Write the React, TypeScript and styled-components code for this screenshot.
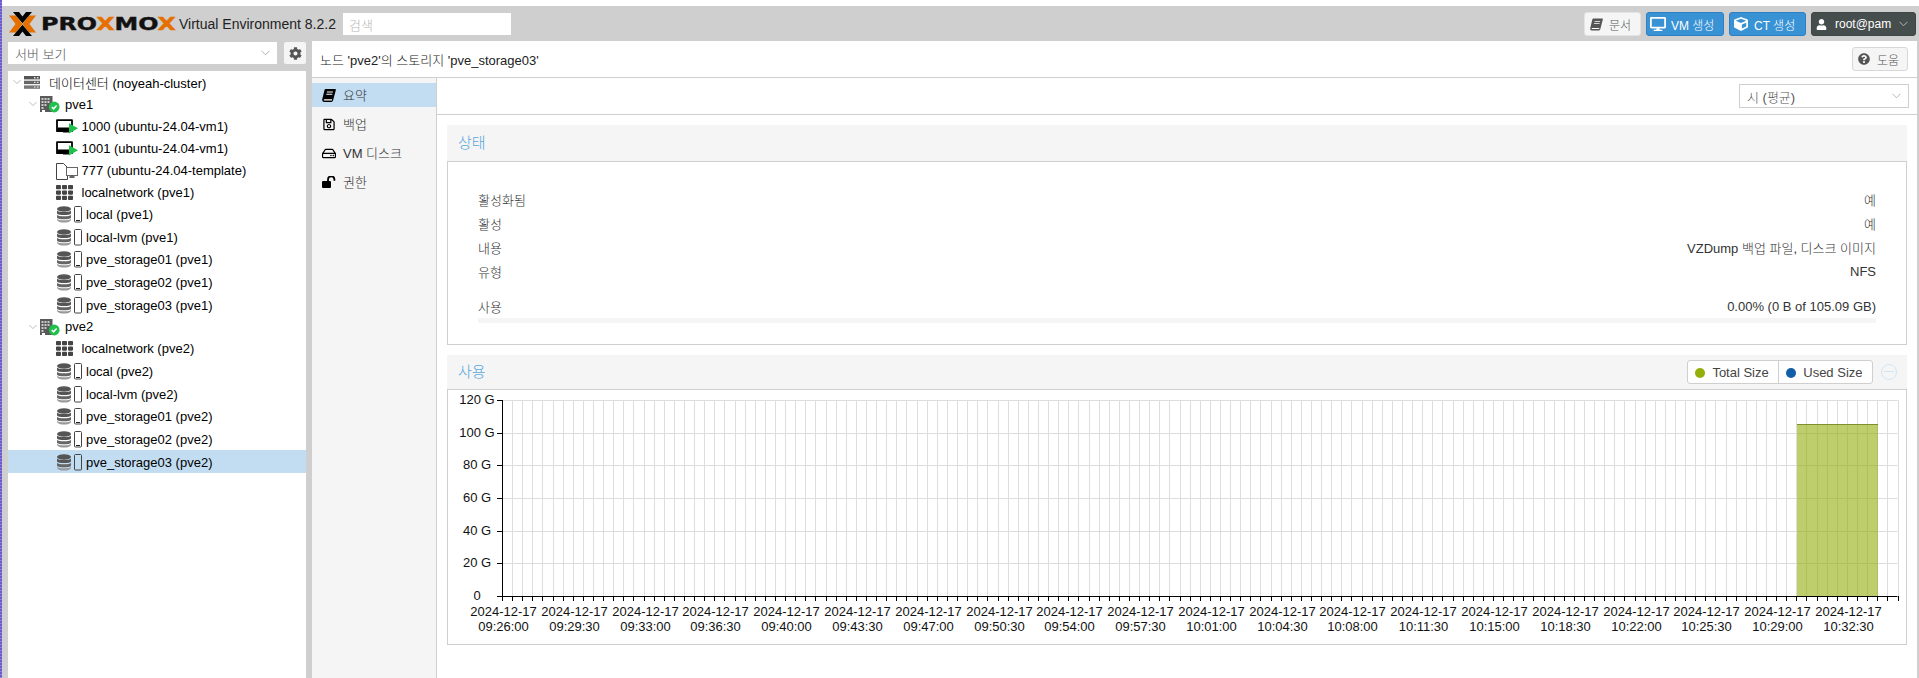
import { Fragment } from "react";
import styled, { createGlobalStyle } from "styled-components";
import {
  FaCog,
  FaCube,
  FaDesktop,
  FaQuestionCircle,
  FaRegHdd,
  FaRegSave,
  FaTh,
  FaUser,
} from "react-icons/fa";

const GlobalStyle = createGlobalStyle`
  html, body {
    margin: 0;
    padding: 0;
    background: #fff;
    overflow: hidden;
  }
  body {
    font-family: "Liberation Sans", "Noto Sans CJK KR", sans-serif;
    font-size: 13px;
    font-weight: 300;
    color: #000;
  }
`;

const Page = styled.div`
  display: flex;
  height: 678px;
  overflow: hidden;
`;

const EdgeStrip = styled.div`
  width: 2px;
  flex: none;
  background: repeating-linear-gradient(#6a5acd 0 2px, #8f84dc 2px 3px);
`;

const Viewport = styled.div`
  flex: 1;
  min-width: 0;
  display: flex;
  flex-direction: column;
  padding-top: 6px;
`;

const Shell = styled.div`
  flex: 1;
  min-height: 0;
  display: flex;
  flex-direction: column;
  background: #cfcfcf;
`;

const Header = styled.header`
  height: 35px;
  flex: none;
  display: flex;
  align-items: center;
  padding: 1px 3px 0 7px;
  box-sizing: border-box;
`;

const Version = styled.span`
  margin-left: 3px;
  font-size: 14px;
  white-space: nowrap;
  color: #222;
`;

const SearchBox = styled.div`
  width: 168px;
  height: 22px;
  margin-left: 7px;
  padding-left: 6px;
  box-sizing: border-box;
  display: flex;
  align-items: center;
  background: #fff;
  color: #b5b5b5;
`;

const HeaderActions = styled.div`
  margin-left: auto;
  display: flex;
  align-items: center;
  gap: 5px;
`;

const HeaderButton = styled.div<{
  $kind: "plain" | "blue" | "dark";
  $width: number;
  $pad: number;
  $gap: number;
}>`
  width: ${(p) => p.$width}px;
  height: 24px;
  box-sizing: border-box;
  display: flex;
  align-items: center;
  gap: ${(p) => p.$gap}px;
  padding-left: ${(p) => p.$pad}px;
  border-radius: 3px;
  font-size: 12px;
  white-space: nowrap;
  border: 1px solid
    ${(p) => (p.$kind === "blue" ? "#2f7fc4" : p.$kind === "dark" ? "#3f4745" : "#e4e4e4")};
  background: ${(p) => (p.$kind === "blue" ? "#3892d4" : p.$kind === "dark" ? "#464d4d" : "#f5f5f5")};
  color: ${(p) => (p.$kind === "plain" ? "#555" : "#fff")};
  svg {
    flex: none;
  }
`;

const Body = styled.div`
  flex: 1;
  min-height: 0;
  display: flex;
  gap: 6px;
  padding: 0 2px 0 6px;
`;

const Sidebar = styled.aside`
  width: 298px;
  flex: none;
  display: flex;
  flex-direction: column;
  gap: 7px;
  padding-top: 1px;
`;

const ViewRow = styled.div`
  display: flex;
  gap: 7px;
  height: 22px;
`;

const ViewSelect = styled.div`
  flex: 1;
  display: flex;
  align-items: center;
  justify-content: space-between;
  padding: 0 7px;
  background: #fff;
  color: #555;
`;

const GearButton = styled.div`
  width: 22px;
  display: flex;
  align-items: center;
  justify-content: center;
  background: #f5f5f5;
  color: #555;
  border-radius: 2px;
`;

const Tree = styled.div`
  flex: 1;
  background: #fff;
`;

const TreeRow = styled.div<{ $level: number; $tall: boolean; $selected?: boolean }>`
  height: ${(p) => (p.$tall ? 22.6 : 22)}px;
  box-sizing: border-box;
  display: flex;
  align-items: center;
  padding-top: ${(p) => (p.$tall ? 1 : 0)}px;
  padding-left: ${(p) => 5 + p.$level * 16}px;
  background: ${(p) => (p.$selected ? "#c2ddf2" : "transparent")};
  white-space: nowrap;
`;

const Expander = styled.span<{ $open: boolean }>`
  width: 11px;
  flex: none;
  display: flex;
  align-items: center;
  visibility: ${(p) => (p.$open ? "visible" : "hidden")};
`;

const NodeIcon = styled.span<{ $width: number }>`
  width: ${(p) => p.$width}px;
  height: 20px;
  flex: none;
  display: flex;
  align-items: center;
`;

const Main = styled.main`
  flex: 1;
  min-width: 0;
  display: flex;
  flex-direction: column;
  background: #fff;
`;

const TitleBar = styled.div`
  height: 36px;
  flex: none;
  display: flex;
  align-items: center;
  justify-content: space-between;
  padding: 0 9px 0 8px;
  border-bottom: 1px solid #cfcfcf;
  color: #222;
`;

const HelpButton = styled.div`
  width: 56px;
  height: 24px;
  box-sizing: border-box;
  display: flex;
  align-items: center;
  gap: 7px;
  padding-left: 5px;
  background: #f5f5f5;
  border: 1px solid #d8d8d8;
  border-radius: 3px;
  font-size: 12px;
  color: #555;
`;

const Columns = styled.div`
  flex: 1;
  min-height: 0;
  display: flex;
`;

const TabBar = styled.nav`
  width: 125px;
  flex: none;
  box-sizing: border-box;
  padding-top: 5px;
  background: #f5f5f5;
  border-right: 1px solid #cfcfcf;
`;

const Tab = styled.div<{ $active?: boolean }>`
  height: 24px;
  margin-bottom: 5px;
  display: flex;
  align-items: center;
  gap: 7px;
  padding-left: 10px;
  background: ${(p) => (p.$active ? "#c2ddf2" : "transparent")};
  color: #333;
  svg {
    color: #000;
    width: 14px;
    flex: none;
  }
`;

const TabText = styled.span`
  margin-top: -2px;
`;

const Content = styled.div`
  flex: 1;
  min-width: 0;
  display: flex;
  flex-direction: column;
`;

const Toolbar = styled.div`
  height: 36px;
  flex: none;
  display: flex;
  align-items: center;
  justify-content: flex-end;
  padding-right: 8px;
  border-bottom: 1px solid #cfcfcf;
`;

const RangeSelect = styled.div`
  width: 170px;
  height: 24px;
  box-sizing: border-box;
  display: flex;
  align-items: center;
  justify-content: space-between;
  padding: 0 7px;
  border: 1px solid #cfcfcf;
  color: #555;
`;

const Panels = styled.div`
  padding: 10px 10px 0;
  display: flex;
  flex-direction: column;
  gap: 10px;
`;

const PanelHead = styled.div<{ $height: number }>`
  height: ${(p) => p.$height}px;
  display: flex;
  align-items: center;
  justify-content: space-between;
  padding: 0 10px 0 11px;
  background: #f5f5f5;
`;

const PanelTitle = styled.span`
  margin-top: -4px;
  font-size: 15px;
  color: #5aa5dc;
`;

const PanelBody = styled.div<{ $height: number }>`
  height: ${(p) => p.$height}px;
  box-sizing: border-box;
  border: 1px solid #cfcfcf;
`;

const StatusList = styled.div`
  padding: 25.5px 30px 0;
`;

const StatusRow = styled.div`
  height: 24px;
  display: flex;
  align-items: center;
  justify-content: space-between;
  color: #333;
`;

const UsageRow = styled(StatusRow)`
  height: 22px;
  margin-top: 12px;
`;

const UsageTrack = styled.div`
  height: 5px;
  background: #f5f5f5;
`;

const Legend = styled.div`
  display: flex;
  height: 24px;
  margin-left: auto;
  box-sizing: border-box;
  border: 1px solid #cfcfcf;
  border-radius: 3px;
  background: #fff;
`;

const LegendItem = styled.div`
  display: flex;
  align-items: center;
  gap: 7px;
  padding: 0 9.5px 0 7px;
  color: #444;
  & + & {
    border-left: 1px solid #cfcfcf;
  }
`;

const LegendDot = styled.span<{ $color: string }>`
  width: 10px;
  height: 10px;
  margin-top: 1px;
  border-radius: 50%;
  background: ${(p) => p.$color};
`;

const CollapseButton = styled.div`
  width: 16px;
  height: 16px;
  box-sizing: border-box;
  margin-left: 8px;
  border: 1px solid #d3e6f4;
  border-radius: 50%;
  position: relative;
  &::after {
    content: "";
    position: absolute;
    left: 2px;
    right: 2px;
    top: 6px;
    height: 1px;
    background: #d3e6f4;
  }
`;

const ChartSvg = styled.svg`
  display: block;
  font-family: "Liberation Sans", sans-serif;
  font-size: 13px;
  font-weight: 400;
`;

// thin angle used by every combo box and tree expander
const Angle = ({ width = 9 }: { width?: number }) => (
  <svg width={width} height="6" viewBox="0 0 9 6">
    <path d="M.5.8l4 4 4-4" fill="none" stroke="#b4b4b4" strokeWidth="1" />
  </svg>
);

// the slanted book of font awesome 4, not in the icon package
const BookIcon = ({ size = 13 }: { size?: number }) => (
  <svg width={size} height={size} viewBox="0 0 14 13">
    <path
      d="M3.6 0H13c.7 0 1 .5.8 1.2L11.2 11c-.3 1.1-1 2-2 2H2.2C1 13 0 12 .2 10.5L2.5 1C2.7.4 3 0 3.6 0z"
      fill="currentColor"
    />
    <path d="M5 2.6h6l-.2.9h-6zM4.4 4.8h6l-.2.9h-6zM2.4 10.2h7.8l-.3 1.2H2.1c-.6-.1-.4-1.2.3-1.2z" fill="#fff" />
  </svg>
);

const UnlockIcon = () => (
  <svg width="14" height="12" viewBox="0 0 14 12">
    <rect x="0" y="5" width="9" height="7" rx="1" fill="currentColor" />
    <path d="M6 5.500V3.600a3 3 0 0 1 6.400 0v1.200" fill="none" stroke="currentColor" strokeWidth="1.8" />
  </svg>
);

const DatacenterGlyph = () => (
  <svg width="16" height="13" viewBox="0 0 16 13">
    <rect y="0" width="16" height="3.4" fill="#555" />
    <rect y="4.7" width="16" height="3.4" fill="#666" />
    <rect y="9.4" width="16" height="3.4" fill="#777" />
    <path d="M10 1h1.500v1.400H10zM13 1h1.500v1.400H13zM10 5.700h1.500v1.400H10zM13 5.700h1.500v1.400H13zM10 10.400h1.500v1.400H10zM13 10.400h1.500v1.400H13z" fill="#ddd" />
  </svg>
);

const NodeGlyph = () => (
  <svg width="20" height="18" viewBox="0 0 20 18">
    <rect x="0" y="1" width="12.5" height="16" fill="#5a5a5a" />
    <path d="M1.500 3h2v2h-2zM4.500 3h2v2h-2zM7.500 3h2v2h-2zM1.500 6h2v2h-2zM4.500 6h2v2h-2zM7.500 6h2v2h-2zM1.500 9h2v2h-2zM4.500 9h2v2h-2zM1.500 12h2v2h-2z" fill="#c8c8c8" />
    <rect x="2" y="15" width="3" height="2" fill="#fff" />
    <circle cx="14.2" cy="12" r="5.4" fill="#21bf4b" />
    <path d="M11.800 12l1.800 1.800 3-3.200" fill="none" stroke="#fff" strokeWidth="1.5" />
  </svg>
);

const VmGlyph = () => (
  <svg width="23" height="18" viewBox="0 0 23 18">
    <path d="M1 3.200h15v11H1z" fill="none" stroke="#000" strokeWidth="1.8" strokeLinejoin="round" />
    <path d="M1.500 10.500H13v5H7v-1.500H1.500z" fill="#000" />
    <path d="M13 6.200l9 5-9 5.300z" fill="#21bf4b" />
  </svg>
);

const TemplateGlyph = () => (
  <svg width="23" height="20" viewBox="0 0 23 20">
    <path d="M.5 19.500V3.500h7l4 4v12z" fill="#fff" stroke="#444" />
    <rect x="10.500" y="7.500" width="11" height="8" fill="#fff" stroke="#666" />
    <path d="M13.500 16h5v2h-5z" fill="#666" />
  </svg>
);

const StorageGlyph = ({ bar }: { bar: boolean }) => (
  <svg width="27" height="17" viewBox="0 0 27 17">
    <ellipse cx="8" cy="3" rx="7" ry="2.8" fill="#555" />
    <path d="M1 4.600c1.200 2 13 2 14 0V7.600c-1 2-12.800 2-14 0z" fill="#555" />
    <path d="M1 8.800c1.200 2 13 2 14 0v3c-1 2-12.800 2-14 0z" fill="#666" />
    <path d="M1 12.800c1.200 2 13 2 14 0v1.200c-1 3.400-12.800 3.400-14 0z" fill="#999" />
    <rect x="18.500" y="0.500" width="7" height="15.500" rx="1" fill="none" stroke="#444" />
    {bar && <rect x="20" y="14" width="4" height="1" fill="#222" />}
  </svg>
);

type Kind = "dc" | "node" | "vm" | "template" | "net" | "storage";

const iconWidth: Record<Kind, number> = {
  dc: 25,
  node: 25,
  vm: 25.5,
  template: 25.5,
  net: 25.5,
  storage: 30,
};

const renderIcon = (kind: Kind, bar: boolean) => {
  if (kind === "dc") return <DatacenterGlyph />;
  if (kind === "node") return <NodeGlyph />;
  if (kind === "vm") return <VmGlyph />;
  if (kind === "template") return <TemplateGlyph />;
  if (kind === "net") return <FaTh size={17} color="#444" />;
  return <StorageGlyph bar={bar} />;
};

interface Item {
  label: string;
  level: number;
  kind: Kind;
  bar?: boolean;
  selected?: boolean;
}

const storageRows = (node: string): Item[] => [
  { label: `local (${node})`, level: 2, kind: "storage", bar: true },
  { label: `local-lvm (${node})`, level: 2, kind: "storage" },
  { label: `pve_storage01 (${node})`, level: 2, kind: "storage", bar: true },
  { label: `pve_storage02 (${node})`, level: 2, kind: "storage", bar: true },
  { label: `pve_storage03 (${node})`, level: 2, kind: "storage", selected: node === "pve2" },
];

const items: Item[] = [
  { label: "데이터센터 (noyeah-cluster)", level: 0, kind: "dc" },
  { label: "pve1", level: 1, kind: "node" },
  { label: "1000 (ubuntu-24.04-vm1)", level: 2, kind: "vm" },
  { label: "1001 (ubuntu-24.04-vm1)", level: 2, kind: "vm" },
  { label: "777 (ubuntu-24.04-template)", level: 2, kind: "template" },
  { label: "localnetwork (pve1)", level: 2, kind: "net" },
  ...storageRows("pve1"),
  { label: "pve2", level: 1, kind: "node" },
  { label: "localnetwork (pve2)", level: 2, kind: "net" },
  ...storageRows("pve2"),
];

const statusRows = [
  ["활성화됨", "예"],
  ["활성", "예"],
  ["내용", "VZDump 백업 파일, 디스크 이미지"],
  ["유형", "NFS"],
];

const Logo = () => (
  <svg width="167" height="24" viewBox="0 0 167 24">
    <path d="M0 3.500h7l6.500 8.500L7 20.500H0L6.500 12zM27 3.500h-7L13.500 12l6.500 8.500h7L20.500 12z" fill="#e57000" />
    <path d="M4 0h6l3.500 4.500L17 0h6l-9.500 11.300zM4 24h6l3.500-4.500L17 24h6l-9.500-11.300z" fill="#000" />
    <text
      x="32"
      y="18"
      textLength="135"
      lengthAdjust="spacingAndGlyphs"
      fontFamily="DejaVu Sans"
      fontWeight="700"
      fontSize="17"
      fill="#111"
      stroke="#111"
      strokeWidth="0.4"
    >
      PRO<tspan fill="#e57000" stroke="#e57000">X</tspan>MO<tspan fill="#e57000" stroke="#e57000">X</tspan>
    </text>
  </svg>
);

// chart geometry, relative to the panel body
const plotLeft = 54;
const plotRight = 1449.5;
const plotTop = 10;
const plotBottom = 206;
const tickCount = 138;
const tickStep = (plotRight - plotLeft) / tickCount;
const tickX = (i: number) => Math.round(plotLeft + i * tickStep) + 0.5;

const yLabels = ["120 G", "100 G", "80 G", "60 G", "40 G", "20 G", "0"];
const yAt = (i: number) => Math.round(plotTop + (i * (plotBottom - plotTop)) / 6) + 0.5;

const timeLabels = [
  "09:26:00", "09:29:30", "09:33:00", "09:36:30", "09:40:00", "09:43:30", "09:47:00",
  "09:50:30", "09:54:00", "09:57:30", "10:01:00", "10:04:30", "10:08:00", "10:11:30",
  "10:15:00", "10:18:30", "10:22:00", "10:25:30", "10:29:00", "10:32:30",
];

const UsageChart = () => {
  const ticks = Array.from({ length: tickCount + 1 }, (_, i) => tickX(i));
  return (
    <ChartSvg width="1458" height="254" viewBox="0 0 1458 254">
      {ticks.slice(1).map((x) => (
        <line key={x} x1={x} x2={x} y1={plotTop} y2={plotBottom} stroke="#ddd" />
      ))}
      {yLabels.slice(0, 6).map((l, i) => (
        <line key={l} x1={plotLeft} x2={plotRight} y1={yAt(i)} y2={yAt(i)} stroke="#ddd" />
      ))}
      <rect x={1349} y={34} width={81} height={172} fill="#94ae0a" fillOpacity={0.6} />
      <line x1={1349} x2={1430} y1={34.5} y2={34.5} stroke="#7d9030" />
      <line x1={plotLeft + 0.5} x2={plotLeft + 0.5} y1={plotTop} y2={plotBottom} stroke="#000" />
      <line x1={plotLeft} x2={plotRight} y1={plotBottom + 0.5} y2={plotBottom + 0.5} stroke="#000" />
      {ticks.map((x) => (
        <line key={x} x1={x} x2={x} y1={plotBottom} y2={plotBottom + 5} stroke="#000" />
      ))}
      {yLabels.map((l, i) => (
        <Fragment key={l}>
          <line x1={plotLeft - 5} x2={plotLeft} y1={yAt(i)} y2={yAt(i)} stroke="#000" />
          <text x={29} y={yAt(i) + 3} textAnchor="middle" fill="#111">
            {l}
          </text>
        </Fragment>
      ))}
      {timeLabels.map((t, i) => (
        <text key={t} textAnchor="middle" fill="#111">
          <tspan x={tickX(i * 7) + 1} y={226}>
            2024-12-17
          </tspan>
          <tspan x={tickX(i * 7) + 1} y={241}>
            {t}
          </tspan>
        </text>
      ))}
    </ChartSvg>
  );
};

export default function App() {
  return (
    <Page>
      <GlobalStyle />
      <EdgeStrip />
      <Viewport>
        <Shell>
          <Header>
            <Logo />
            <Version>Virtual Environment 8.2.2</Version>
            <SearchBox>검색</SearchBox>
            <HeaderActions>
              <HeaderButton $kind="plain" $width={57} $pad={5} $gap={6}>
                <BookIcon />
                문서
              </HeaderButton>
              <HeaderButton $kind="blue" $width={78} $pad={3} $gap={5}>
                <FaDesktop size={16} />
                VM 생성
              </HeaderButton>
              <HeaderButton $kind="blue" $width={77} $pad={4} $gap={6}>
                <FaCube size={14} />
                CT 생성
              </HeaderButton>
              <HeaderButton $kind="dark" $width={105} $pad={4} $gap={8}>
                <FaUser size={11} />
                root@pam
                <Angle />
              </HeaderButton>
            </HeaderActions>
          </Header>
          <Body>
            <Sidebar>
              <ViewRow>
                <ViewSelect>
                  서버 보기
                  <Angle />
                </ViewSelect>
                <GearButton>
                  <FaCog size={13} />
                </GearButton>
              </ViewRow>
              <Tree>
                {items.map((item) => (
                  <TreeRow
                    key={item.label}
                    $level={item.level}
                    $tall={item.kind === "storage"}
                    $selected={item.selected}
                  >
                    <Expander $open={item.level < 2}>
                      <Angle width={8} />
                    </Expander>
                    <NodeIcon $width={iconWidth[item.kind]}>
                      {renderIcon(item.kind, !!item.bar)}
                    </NodeIcon>
                    {item.label}
                  </TreeRow>
                ))}
              </Tree>
            </Sidebar>
            <Main>
              <TitleBar>
                노드 'pve2'의 스토리지 'pve_storage03'
                <HelpButton>
                  <FaQuestionCircle size={12} />
                  도움
                </HelpButton>
              </TitleBar>
              <Columns>
                <TabBar>
                  <Tab $active>
                    <BookIcon />
                    <TabText>요약</TabText>
                  </Tab>
                  <Tab>
                    <FaRegSave size={13} />
                    <TabText>백업</TabText>
                  </Tab>
                  <Tab>
                    <FaRegHdd size={13} />
                    <TabText>VM 디스크</TabText>
                  </Tab>
                  <Tab>
                    <UnlockIcon />
                    <TabText>권한</TabText>
                  </Tab>
                </TabBar>
                <Content>
                  <Toolbar>
                    <RangeSelect>
                      시 (평균)
                      <Angle />
                    </RangeSelect>
                  </Toolbar>
                  <Panels>
                    <div>
                      <PanelHead $height={36}>
                        <PanelTitle>상태</PanelTitle>
                      </PanelHead>
                      <PanelBody $height={184}>
                        <StatusList>
                          {statusRows.map(([k, v]) => (
                            <StatusRow key={k}>
                              <span>{k}</span>
                              <span>{v}</span>
                            </StatusRow>
                          ))}
                          <UsageRow>
                            <span>사용</span>
                            <span>0.00% (0 B of 105.09 GB)</span>
                          </UsageRow>
                          <UsageTrack />
                        </StatusList>
                      </PanelBody>
                    </div>
                    <div>
                      <PanelHead $height={34}>
                        <PanelTitle>사용</PanelTitle>
                        <Legend>
                          <LegendItem>
                            <LegendDot $color="#94ae0a" />
                            Total Size
                          </LegendItem>
                          <LegendItem>
                            <LegendDot $color="#115fa6" />
                            Used Size
                          </LegendItem>
                        </Legend>
                        <CollapseButton />
                      </PanelHead>
                      <PanelBody $height={256}>
                        <UsageChart />
                      </PanelBody>
                    </div>
                  </Panels>
                </Content>
              </Columns>
            </Main>
          </Body>
        </Shell>
      </Viewport>
    </Page>
  );
}
